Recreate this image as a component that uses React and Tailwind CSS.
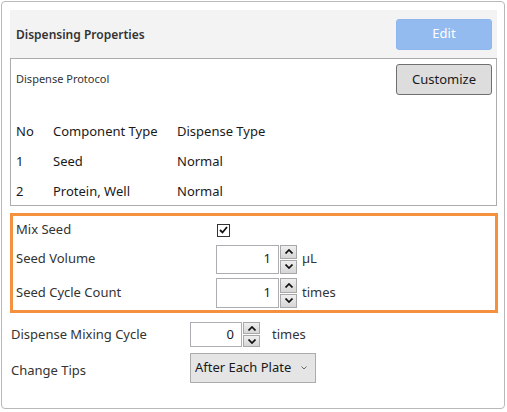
import React from "react";

const font = { fontFamily: '"Noto Sans", "Open Sans", sans-serif' };

function Spinner({ value, inputW, h }) {
  return (
    <div className="flex items-stretch" style={{ height: h }}>
      <div
        className="flex items-center justify-end border border-[#abadb3] bg-white pr-[7px] text-[13px] text-[#1a1a1a]"
        style={{ width: inputW }}
      >
        {value}
      </div>
      <div className="flex w-[18px] flex-col gap-[1px] pl-[1px]">
        <SpinBtn up />
        <SpinBtn />
      </div>
    </div>
  );
}

function SpinBtn({ up }) {
  return (
    <div className="flex flex-1 items-center justify-center border border-[#a8a8a8] bg-gradient-to-b from-[#efefef] to-[#d6d6d6]">
      <svg width="8" height="5" viewBox="0 0 8 5">
        {up ? (
          <path d="M0.5 4.5 L4 1 L7.5 4.5" fill="none" stroke="#111" strokeWidth="1.7" />
        ) : (
          <path d="M0.5 0.5 L4 4 L7.5 0.5" fill="none" stroke="#111" strokeWidth="1.7" />
        )}
      </svg>
    </div>
  );
}

export default function App() {
  return (
    <div className="h-[412px] w-[507px] bg-white p-[1px] text-[#262626]" style={font}>
      <div className="h-[408px] w-[504px] rounded-[4px] border border-[#b9b9b9] pl-[8px] pt-[8px]">
        {/* header */}
        <div className="flex h-[48px] w-[487px] items-center justify-between bg-[#f3f3f3] pl-[6px] pr-[5px]">
          <span className="pt-[1px] text-[12px] font-semibold text-[#333]">Dispensing Properties</span>
          <button className="h-[31px] w-[96px] rounded-[3px] border border-[#8db7ec] bg-[#93bbef] text-[13px] text-white">
            Edit
          </button>
        </div>

        {/* protocol box */}
        <div className="h-[148px] w-[487px] overflow-hidden border border-[#acacac]">
          <div className="flex items-center justify-between pl-[5px] pr-[4px] pt-[5px]">
            <span className="text-[11px] text-[#333]">Dispense Protocol</span>
            <button className="h-[31px] w-[96px] rounded-[3px] border border-[#707070] bg-[#dddddd] text-[13px] text-[#1a1a1a]">
              Customize
            </button>
          </div>
          <div className="mt-[22px] pl-[5px] text-[13px] text-[#1a1a1a]">
            {[
              ["No", "Component Type", "Dispense Type"],
              ["1", "Seed", "Normal"],
              ["2", "Protein, Well", "Normal"],
            ].map((r, i) => (
              <div key={i} className="grid h-[30px] grid-cols-[37px_124px_1fr] items-center">
                <span>{r[0]}</span>
                <span>{r[1]}</span>
                <span>{r[2]}</span>
              </div>
            ))}
          </div>
        </div>

        {/* mix seed group */}
        <div className="mt-[7px] h-[100px] w-[488px] border-[3px] border-[#f5913e] pl-[3px] text-[13px] text-[#333]">
          <div className="flex h-[28px] items-center">
            <span className="w-[201px]">Mix Seed</span>
            <div className="flex h-[13px] w-[13px] items-center justify-center border border-[#333] bg-white">
              <svg width="9" height="8" viewBox="0 0 9 8">
                <path d="M1 4 L3.5 6.5 L8 1" fill="none" stroke="#111" strokeWidth="1.8" />
              </svg>
            </div>
          </div>
          <div className="flex h-[30px] items-center">
            <span className="w-[200px]">Seed Volume</span>
            <Spinner value="1" inputW={63} h={29} />
            <span className="ml-[5px]">µL</span>
          </div>
          <div className="mt-[4px] flex h-[30px] items-center">
            <span className="w-[200px]">Seed Cycle Count</span>
            <Spinner value="1" inputW={63} h={30} />
            <span className="ml-[5px]">times</span>
          </div>
        </div>

        {/* other settings */}
        <div className="pl-[1px] text-[13px] text-[#333]">
          <div className="mt-[9px] flex h-[25px] items-center">
            <span className="w-[179px]">Dispense Mixing Cycle</span>
            <Spinner value="0" inputW={52} h={25} />
            <span className="ml-[12px]">times</span>
          </div>
          <div className="mt-[6px] flex h-[30px] items-center">
            <span className="w-[179px] pt-[6px]">Change Tips</span>
            <div className="flex h-[30px] w-[126px] items-center justify-between border border-[#acacac] bg-[#e5e5e5] pl-[4px] pr-[8px] text-[#1a1a1a]">
              <span>After Each Plate</span>
              <svg width="6" height="4" viewBox="0 0 6 4">
                <path d="M0.5 0.5 L3 3 L5.5 0.5" fill="none" stroke="#666" strokeWidth="1" />
              </svg>
            </div>
          </div>
        </div>
      </div>
    </div>
  );
}
